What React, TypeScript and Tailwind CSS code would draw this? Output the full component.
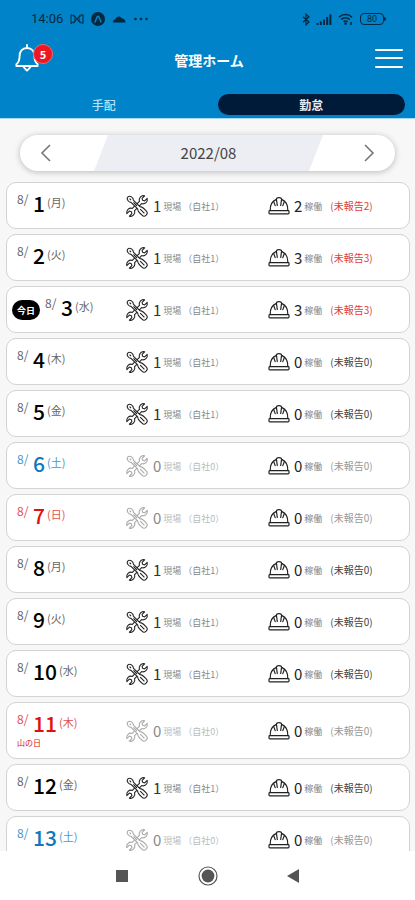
import React from "react";

type Tone = "weekday" | "saturday" | "holiday";

interface Day {
  date: number;
  weekday: string;
  tone: Tone;
  sites: number;
  working: number;
  unreported: number;
  today?: boolean;
  note?: string;
}

const days: Day[] = [
  { date: 1, weekday: "月", tone: "weekday", sites: 1, working: 2, unreported: 2 },
  { date: 2, weekday: "火", tone: "weekday", sites: 1, working: 3, unreported: 3 },
  { date: 3, weekday: "水", tone: "weekday", sites: 1, working: 3, unreported: 3, today: true },
  { date: 4, weekday: "木", tone: "weekday", sites: 1, working: 0, unreported: 0 },
  { date: 5, weekday: "金", tone: "weekday", sites: 1, working: 0, unreported: 0 },
  { date: 6, weekday: "土", tone: "saturday", sites: 0, working: 0, unreported: 0 },
  { date: 7, weekday: "日", tone: "holiday", sites: 0, working: 0, unreported: 0 },
  { date: 8, weekday: "月", tone: "weekday", sites: 1, working: 0, unreported: 0 },
  { date: 9, weekday: "火", tone: "weekday", sites: 1, working: 0, unreported: 0 },
  { date: 10, weekday: "水", tone: "weekday", sites: 1, working: 0, unreported: 0 },
  { date: 11, weekday: "木", tone: "holiday", sites: 0, working: 0, unreported: 0, note: "山の日" },
  { date: 12, weekday: "金", tone: "weekday", sites: 1, working: 0, unreported: 0 },
  { date: 13, weekday: "土", tone: "saturday", sites: 0, working: 0, unreported: 0 },
];

const strongTone: Record<Tone, string> = {
  weekday: "text-black",
  saturday: "text-[#1277bd]",
  holiday: "text-[#e01010]",
};

const softTone: Record<Tone, string> = {
  weekday: "text-[#666]",
  saturday: "text-[#4a97cc]",
  holiday: "text-[#e25050]",
};

function ToolsIcon({ className }: { className: string }) {
  return (
    <svg viewBox="0 0 24 24" className={className} fill="white" stroke="currentColor" strokeWidth="1.1" strokeLinejoin="round" aria-hidden="true">
      <path
        transform="rotate(45 12 12)"
        d="M10.4 7V17C7.4 18.6 7.2 22.8 10.2 24.6V21L12 20L13.8 21V24.6C16.8 22.8 16.6 18.6 13.6 17V7C16.6 5.4 16.8 1.2 13.8-.6V3L12 4L10.2 3V-.6C7.2 1.2 7.4 5.4 10.4 7Z"
      />
      <g transform="rotate(-45 12 12)">
        <path d="M10.4 5.2V14.5C8.8 16 8.8 18 9 22C9 26 15 26 15 22C15.2 18 15.2 16 13.6 14.5V5.2C15.2 3.8 15 -.8 12 -.8C9 -.8 8.8 3.8 10.4 5.2Z" />
        <path d="M12 16.5V22.5M12 1.5V3.5M12 7V12" />
      </g>
    </svg>
  );
}

function HelmetIcon({ className }: { className: string }) {
  return (
    <svg viewBox="0 0 22 19" className={className} fill="none" stroke="currentColor" strokeWidth="1.2" strokeLinejoin="round" strokeLinecap="round" aria-hidden="true">
      <rect x="1" y="14.6" width="20" height="3.2" rx="0.8" />
      <path d="M2.2 14.4C2 9 4.2 5.2 8.4 3.4M19.8 14.4C20 9 17.8 5.2 13.6 3.4" />
      <path d="M9.3 9.5L8.4 3.2C8.6 1.2 13.4 1.2 13.6 3.2L12.7 9.5" />
      <path d="M7.2 9.6L5.7 5.6M14.8 9.6L16.3 5.6" />
    </svg>
  );
}

function StatusBar() {
  return (
    <div className="flex h-[38px] items-center justify-between pl-[31px] pr-[29px] text-[#05283f]">
      <div className="flex items-center gap-[7px]">
        <span className="font-['Roboto',sans-serif] text-[13px] leading-4">14:06</span>
        <svg viewBox="0 0 14 12" className="h-3 w-[14px]" fill="none" stroke="currentColor" strokeWidth="1" aria-hidden="true">
          <path d="M1 1.5L5 4V8L1 10.5ZM13 1.5L9 4V8L13 10.5ZM3.5 1.5L10.5 10.5M10.5 1.5L3.5 10.5" />
        </svg>
        <svg viewBox="0 0 14 14" className="size-[14px]" aria-hidden="true">
          <circle cx="7" cy="7" r="7" fill="currentColor" />
          <path d="M4 10L6 5.2Q7 3.4 8 5.2L10 10" fill="none" stroke="#0083c8" strokeWidth="1.5" strokeLinecap="round" />
        </svg>
        <svg viewBox="0 0 14 8" className="h-2 w-[14px]" fill="currentColor" aria-hidden="true">
          <path d="M1 7.6C.4 5.6 2 4.4 3.2 4.4C4 1.4 8 .2 9.8 3.6C12 3.4 13.6 5.4 13.4 7.6Z" />
        </svg>
        <svg viewBox="0 0 16 4" className="h-1 w-4" fill="currentColor" aria-hidden="true">
          <circle cx="2.5" cy="2" r="1.3" />
          <circle cx="8" cy="2" r="1.3" />
          <circle cx="13.5" cy="2" r="1.3" />
        </svg>
      </div>
      <div className="flex items-center gap-[6px]">
        <svg viewBox="0 0 8 13" className="h-[13px] w-2" fill="none" stroke="currentColor" strokeWidth="1.2" aria-hidden="true">
          <path d="M1 3.8L7 9L4 11.8V1.2L7 4L1 9.2" />
        </svg>
        <svg viewBox="0 0 16 11" className="h-[11px] w-4" fill="currentColor" aria-hidden="true">
          <path d="M.5 9H2.5V11H.5ZM3.8 7.5H5.8V11H3.8ZM7 5.5H9V11H7ZM10.2 3H12.2V11H10.2ZM13.4 .3H15.4V11H13.4Z" />
        </svg>
        <svg viewBox="0 0 16 12" className="h-3 w-4" fill="none" stroke="currentColor" strokeWidth="1.4" aria-hidden="true">
          <path d="M1 4.2C4.5.6 10.5.6 14 4.2M3.2 6.6C5.6 4.2 9.4 4.2 11.8 6.6M5.4 8.8C6.8 7.6 8.2 7.6 9.6 8.8" />
          <circle cx="7.5" cy="10.6" r=".7" />
          <path d="M13 9V12" />
        </svg>
        <div className="flex items-center">
          <span className="flex h-3 w-6 items-center justify-center rounded-[4px] border border-current font-['Roboto',sans-serif] text-[9px] leading-none">80</span>
          <span className="h-1 w-[2px] rounded-r-sm bg-current" />
        </div>
      </div>
    </div>
  );
}

function Header() {
  return (
    <header className="border-b border-[#a9d8f2] bg-[#0083c8] text-white">
      <StatusBar />
      <div className="flex h-11 items-center justify-between pl-[15px] pr-3">
        <button type="button" aria-label="お知らせ 5件" className="relative mb-1 h-7 w-10">
          <svg viewBox="0 0 24 28" className="h-7 w-6" fill="none" stroke="currentColor" strokeWidth="1.9" strokeLinejoin="round" strokeLinecap="round" aria-hidden="true">
            <path d="M12 1V4M12 4C7 4 4.6 7.6 4.6 12C4.6 17 3.6 18.6 1.4 20.2V22H22.6V20.2C20.4 18.6 19.4 17 19.4 12C19.4 7.6 17 4 12 4ZM8.4 22.4C9 24 10 24.4 12 26.6C14 24.4 15 24 15.6 22.4" />
          </svg>
          <span className="absolute left-[18px] top-0 flex size-5 items-center justify-center rounded-full border border-[#f06a6a] bg-[#ee1620] text-[11px] font-bold leading-none">5</span>
        </button>
        <h1 className="text-sm font-bold">管理ホーム</h1>
        <div className="mb-1 flex w-10 justify-end">
          <button type="button" aria-label="メニュー" className="flex h-[19px] w-7 flex-col justify-between">
            <span className="h-[2px] w-full rounded-sm bg-white" />
            <span className="h-[2px] w-full rounded-sm bg-white" />
            <span className="h-[2px] w-full rounded-sm bg-white" />
          </button>
        </div>
      </div>
      <nav className="grid grid-cols-2 pb-[3px] pt-3 text-xs font-medium">
        <button type="button" className="h-[21px] rounded-full text-[#b5e1f7]">手配</button>
        <button type="button" aria-current="page" className="mx-[10px] h-[21px] rounded-full bg-[#001b3a] font-bold text-[#e8edf2]">勤怠</button>
      </nav>
    </header>
  );
}

function Chevron({ path }: { path: string }) {
  return (
    <svg viewBox="0 0 12 18" className="h-[18px] w-3" fill="none" stroke="#777" strokeWidth="1.6" aria-hidden="true">
      <path d={path} />
    </svg>
  );
}

function MonthPicker() {
  return (
    <div className="mx-5 flex h-9 overflow-hidden rounded-full bg-white shadow-[0_1px_6px_rgba(0,0,0,0.25)]">
      <button type="button" aria-label="前の月" className="flex w-[74px] items-center pl-5">
        <Chevron path="M10 1L2 9L10 17" />
      </button>
      <div className="flex flex-1 items-center justify-center bg-[#eceef3] text-[15px] text-[#444] [clip-path:polygon(14px_0,100%_0,calc(100%-14px)_100%,0_100%)]">
        2022/08
      </div>
      <button type="button" aria-label="次の月" className="flex w-[72px] items-center justify-end pr-5">
        <Chevron path="M2 1L10 9L2 17" />
      </button>
    </div>
  );
}

function DayRow({ day }: { day: Day }) {
  const active = day.sites > 0;
  const late = day.unreported > 0;
  return (
    <li>
      <button
        type="button"
        className={`grid w-full grid-cols-[118fr_143fr_141fr] items-center rounded-[10px] border border-[#d3d3d3] bg-white text-left ${day.note ? "h-[57px]" : "h-[47px]"}`}
      >
        <span className={`flex items-start self-start pt-[6px] ${day.today ? "pl-[5px]" : "pl-[10px]"}`}>
          {day.today && (
            <span className="mr-[5px] mt-[7px] flex h-5 w-7 items-center justify-center rounded-full bg-black text-[9px] font-bold leading-none text-white">今日</span>
          )}
          <span className="flex flex-col">
            <span className="flex items-start">
              <span className={`mt-[2px] w-4 text-xs leading-4 ${softTone[day.tone]}`}>8/</span>
              <span className={`text-[21px] font-medium leading-7 ${strongTone[day.tone]}`}>{day.date}</span>
              <span className={`ml-[2px] mt-[5px] text-[11px] leading-4 ${softTone[day.tone]}`}>({day.weekday})</span>
            </span>
            {day.note && <span className="text-[8px] leading-3 text-[#e01010]">{day.note}</span>}
          </span>
        </span>
        <span className="flex items-center">
          <ToolsIcon className={`size-6 ${active ? "text-[#222]" : "text-[#aaa]"}`} />
          <span className={`ml-1 text-[15px] leading-5 ${active ? "text-[#333]" : "text-[#888]"}`}>{day.sites}</span>
          <span className={`ml-[2px] mt-[2px] text-[9px] ${active ? "text-[#888]" : "text-[#bbb]"}`}>現場</span>
          <span className={`ml-[2px] mt-[2px] text-[9px] ${active ? "text-[#888]" : "text-[#bbb]"}`}>（自社{day.sites}）</span>
        </span>
        <span className="flex items-center">
          <HelmetIcon className="h-[19px] w-[22px] text-[#222]" />
          <span className="ml-1 text-[15px] leading-5 text-[#222]">{day.working}</span>
          <span className="ml-[2px] mt-[2px] text-[9px] text-[#888]">稼働</span>
          <span className={`ml-2 text-[10px] ${late ? "text-[#dc4040]" : active ? "text-[#444]" : "text-[#999]"}`}>(未報告{day.unreported})</span>
        </span>
      </button>
    </li>
  );
}

function SystemNav() {
  return (
    <nav className="flex h-[49px] shrink-0 items-center justify-center gap-[66px] bg-white text-[#555]">
      <button type="button" aria-label="履歴">
        <svg viewBox="0 0 20 20" className="size-5" fill="currentColor" aria-hidden="true">
          <path d="M4 4H16V16H4Z" />
        </svg>
      </button>
      <button type="button" aria-label="ホーム">
        <svg viewBox="0 0 20 20" className="size-5" aria-hidden="true">
          <circle cx="10" cy="10" r="9" fill="none" stroke="currentColor" strokeWidth="1.2" />
          <circle cx="10" cy="10" r="6.4" fill="currentColor" />
        </svg>
      </button>
      <button type="button" aria-label="戻る">
        <svg viewBox="0 0 20 20" className="size-5" fill="currentColor" aria-hidden="true">
          <path d="M3 10L15 3V17Z" />
        </svg>
      </button>
    </nav>
  );
}

export default function App() {
  return (
    <div className="flex h-screen flex-col overflow-hidden bg-[#f7f7f7] font-['Noto_Sans_CJK_JP',sans-serif]">
      <Header />
      <main className="min-h-0 flex-1 overflow-hidden pt-4">
        <MonthPicker />
        <ul className="mt-[11px] flex flex-col gap-[5px] pl-[6px] pr-[5px]">
          {days.map((day) => (
            <DayRow key={day.date} day={day} />
          ))}
        </ul>
      </main>
      <SystemNav />
    </div>
  );
}
